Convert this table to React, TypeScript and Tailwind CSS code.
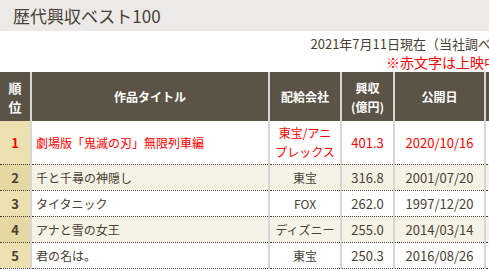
import React from 'react';

type Row = {
  rank: number;
  title: string;
  company: React.ReactNode;
  gross: string;
  date: string;
  showing?: boolean;
};

const rows: Row[] = [
  { rank: 1, title: '劇場版「鬼滅の刃」無限列車編', company: <>東宝/アニ<br />プレックス</>, gross: '401.3', date: '2020/10/16', showing: true },
  { rank: 2, title: '千と千尋の神隠し', company: '東宝', gross: '316.8', date: '2001/07/20' },
  { rank: 3, title: 'タイタニック', company: 'FOX', gross: '262.0', date: '1997/12/20' },
  { rank: 4, title: 'アナと雪の女王', company: 'ディズニー', gross: '255.0', date: '2014/03/14' },
  { rank: 5, title: '君の名は。', company: '東宝', gross: '250.3', date: '2016/08/26' },
];

const font = { fontFamily: '"MS PGothic", "Noto Sans CJK JP", sans-serif' };

export default function App() {
  return (
    <div className="w-[489px] h-[271px] overflow-hidden bg-white text-[#4a4033]" style={font}>
      <div className="w-[560px]">
        <div className="h-[31px] bg-[#ebeae8] pl-[13px] flex items-center text-[17px] text-[#4a4033]">
          歴代興収ベスト100
        </div>
        <div className="w-[504px] text-right text-[13px] leading-[18px] pt-[4px] pb-[1px]">
          <div>2021年7月11日現在（当社調べ）</div>
          <div className="text-[#ff0000] text-[14px] pr-[6px]">※赤文字は上映中</div>
        </div>
        <table className="border-collapse text-[12px] table-fixed w-[560px]">
          <colgroup>
            <col className="w-[31px]" />
            <col className="w-[238px]" />
            <col className="w-[72px]" />
            <col className="w-[53px]" />
            <col className="w-[91px]" />
            <col />
          </colgroup>
          <thead>
            <tr className="bg-[#5c5347] text-white font-bold h-[49px] leading-[19px]">
              <th className="border-r-2 border-[#d6d6d6] text-[13px]">順<br />位</th>
              <th className="border-r-2 border-[#d6d6d6]">作品タイトル</th>
              <th className="border-r-2 border-[#d6d6d6]">配給会社</th>
              <th className="border-r-2 border-[#d6d6d6]">興収<br />(億円)</th>
              <th className="border-r-2 border-[#d6d6d6]">公開日</th>
              <th>上映</th>
            </tr>
          </thead>
          <tbody>
            {rows.map((r, i) => {
              const even = i % 2 === 1;
              const tc = r.showing ? 'text-[#ff0000]' : 'text-[#4a4033]';
              return (
                <tr
                  key={r.rank}
                  className={`border-b border-dotted border-[#4a4033] ${even ? 'bg-[#f5f2e6]' : 'bg-white'} ${r.showing ? 'h-[43px]' : 'h-[26px]'} leading-[19px] ${tc}`}
                >
                  <td className={`text-center font-bold text-[13px] border-r-2 border-r-[#d6d6d6] ${even ? 'bg-[#e6d8a2]' : 'bg-[#ede0b0]'}`}>
                    {r.rank}
                  </td>
                  <td className="pl-[4px] border-r-2 border-r-[#d6d6d6]">{r.title}</td>
                  <td className="text-center border-r-2 border-r-[#d6d6d6]">{r.company}</td>
                  <td className="text-center text-[13px] border-r-2 border-r-[#d6d6d6]">{r.gross}</td>
                  <td className="text-center text-[13px] border-r-2 border-r-[#d6d6d6]">{r.date}</td>
                  <td></td>
                </tr>
              );
            })}
          </tbody>
        </table>
      </div>
    </div>
  );
}
